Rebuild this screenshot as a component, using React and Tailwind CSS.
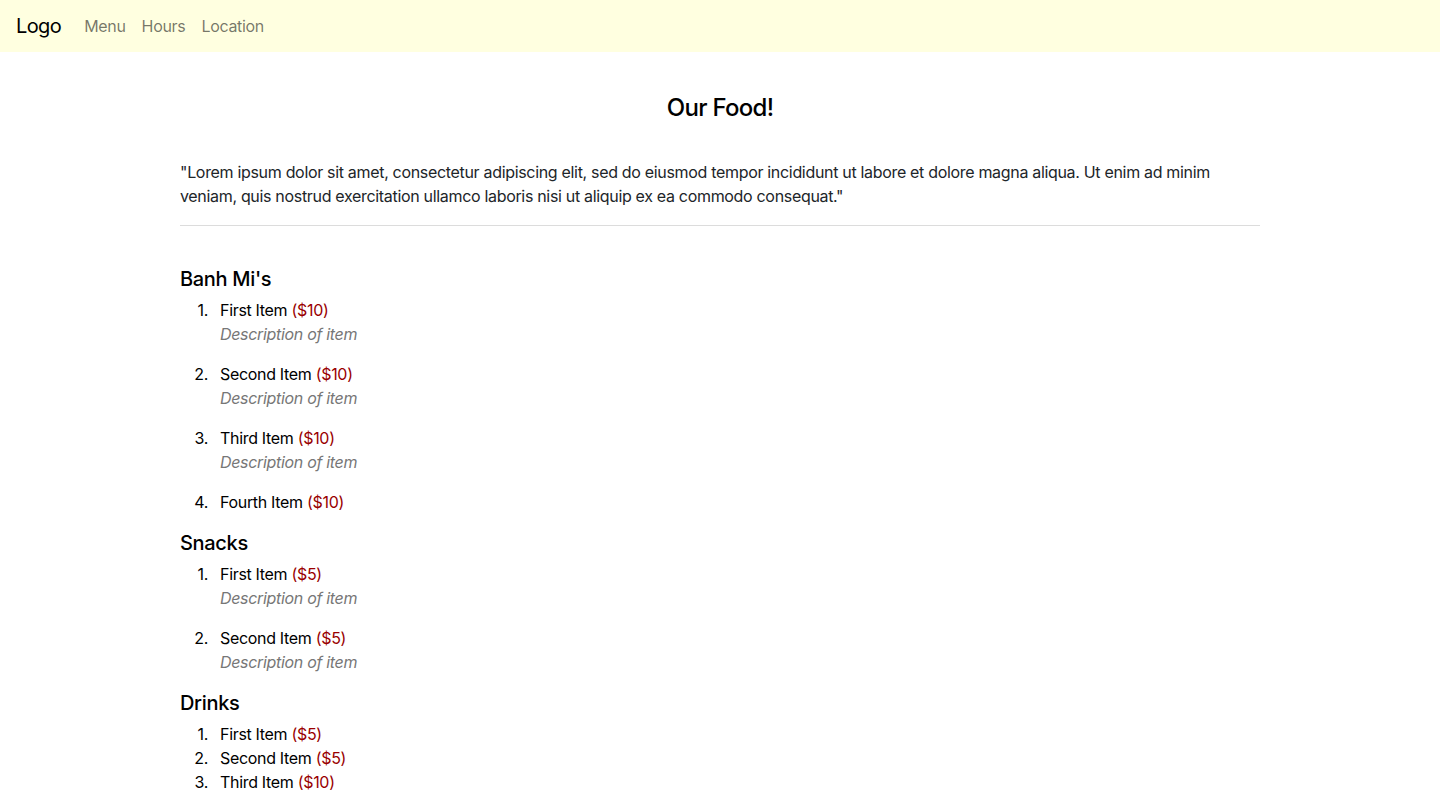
const menu = [
  {
    title: "Banh Mi's",
    items: [
      { name: "First Item", price: "$10", desc: "Description of item" },
      { name: "Second Item", price: "$10", desc: "Description of item" },
      { name: "Third Item", price: "$10", desc: "Description of item" },
      { name: "Fourth Item", price: "$10" },
    ],
  },
  {
    title: "Snacks",
    items: [
      { name: "First Item", price: "$5", desc: "Description of item" },
      { name: "Second Item", price: "$5", desc: "Description of item" },
    ],
  },
  {
    title: "Drinks",
    items: [
      { name: "First Item", price: "$5" },
      { name: "Second Item", price: "$5" },
      { name: "Third Item", price: "$10" },
    ],
  },
];

const App = () => {
  return (
    <div className="min-h-screen bg-white text-[#212529] font-['Inter',sans-serif] text-base leading-6 tracking-[-0.02em]">
      {/* Navbar */}
      <nav className="h-[52px] bg-[#ffffe0] flex items-center px-4">
        <span className="text-xl text-black mr-[15px] tracking-[-0.03em]">Logo</span>
        {["Menu", "Hours", "Location"].map((l) => (
          <a key={l} className="px-2 text-black/55">
            {l}
          </a>
        ))}
      </nav>

      <main className="max-w-[1080px] mx-auto pt-[41px]">
        <h1 className="text-2xl leading-[29px] font-medium text-center text-black tracking-[-0.03em]">Our Food!</h1>

        <p className="mt-[38px] mb-[17px]">
          "Lorem ipsum dolor sit amet, consectetur adipiscing elit, sed do eiusmod tempor incididunt ut labore et dolore magna aliqua. Ut enim ad minim veniam, quis nostrud exercitation ullamco laboris nisi ut aliquip ex ea commodo consequat."
        </p>
        <hr className="border-t border-[#dcdcdc]" />

        <div className="pt-[41px]">
          {menu.map((section) => (
            <section key={section.title} className="mb-[17px]">
              <h3 className="text-xl leading-6 font-medium text-black mb-[7px]">{section.title}</h3>
              <ol>
                {section.items.map((item, i) => (
                  <li key={i} className="flex text-black">
                    <span className="w-10 shrink-0 text-right pr-3">{i + 1}.</span>
                    <div>
                      {item.name} <span className="text-[#990000]">({item.price})</span>
                      {item.desc && (
                        <p className={`italic text-[#777777] ${i < section.items.length - 1 ? "mb-4" : ""}`}>
                          {item.desc}
                        </p>
                      )}
                    </div>
                  </li>
                ))}
              </ol>
            </section>
          ))}
        </div>
      </main>
    </div>
  );
};

export default App;
